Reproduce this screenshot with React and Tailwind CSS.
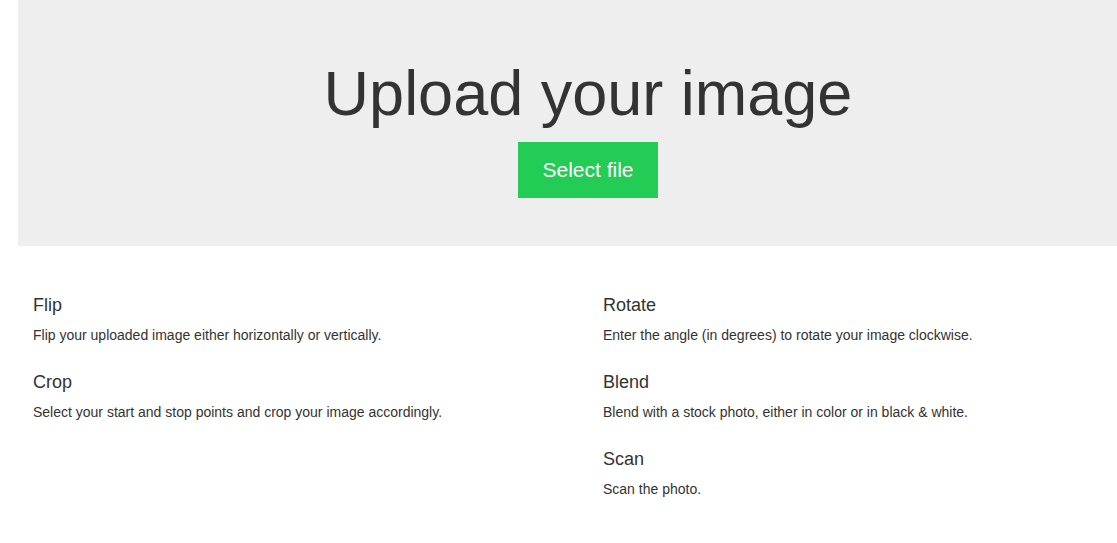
const FEATURES_LEFT = [
  { title: "Flip", text: "Flip your uploaded image either horizontally or vertically." },
  { title: "Crop", text: "Select your start and stop points and crop your image accordingly." },
];

const FEATURES_RIGHT = [
  { title: "Rotate", text: "Enter the angle (in degrees) to rotate your image clockwise." },
  { title: "Blend", text: "Blend with a stock photo, either in color or in black & white." },
  { title: "Scan", text: "Scan the photo." },
];

function Feature({ title, text }) {
  return (
    <div>
      <h4 className="mb-[10px] text-[18px] leading-[20px] text-[#333]">{title}</h4>
      <p className="text-[14px] leading-[20px] text-[#333]">{text}</p>
    </div>
  );
}

export default function App() {
  return (
    <div
      className="min-h-[543px] w-full overflow-hidden bg-white"
      style={{ fontFamily: '"Liberation Sans", Arial, Helvetica, sans-serif' }}
    >
      <div className="ml-[18px] w-[1140px] shrink-0">
        <div className="flex h-[246px] flex-col items-center bg-[#eeeeee] pt-[59px]">
          <h1 className="text-[63px] leading-[69px] text-[#333]">Upload your image</h1>
          <button
            type="button"
            className="mt-[14px] h-[56px] w-[140px] bg-[#22cc55] text-[21px] text-white"
          >
            Select file
          </button>
        </div>

        <div className="grid grid-cols-2 pt-[49px]">
          <div className="flex flex-col gap-[27px] px-[15px]">
            {FEATURES_LEFT.map((f) => (
              <Feature key={f.title} {...f} />
            ))}
          </div>
          <div className="flex flex-col gap-[27px] px-[15px]">
            {FEATURES_RIGHT.map((f) => (
              <Feature key={f.title} {...f} />
            ))}
          </div>
        </div>
      </div>
    </div>
  );
}
